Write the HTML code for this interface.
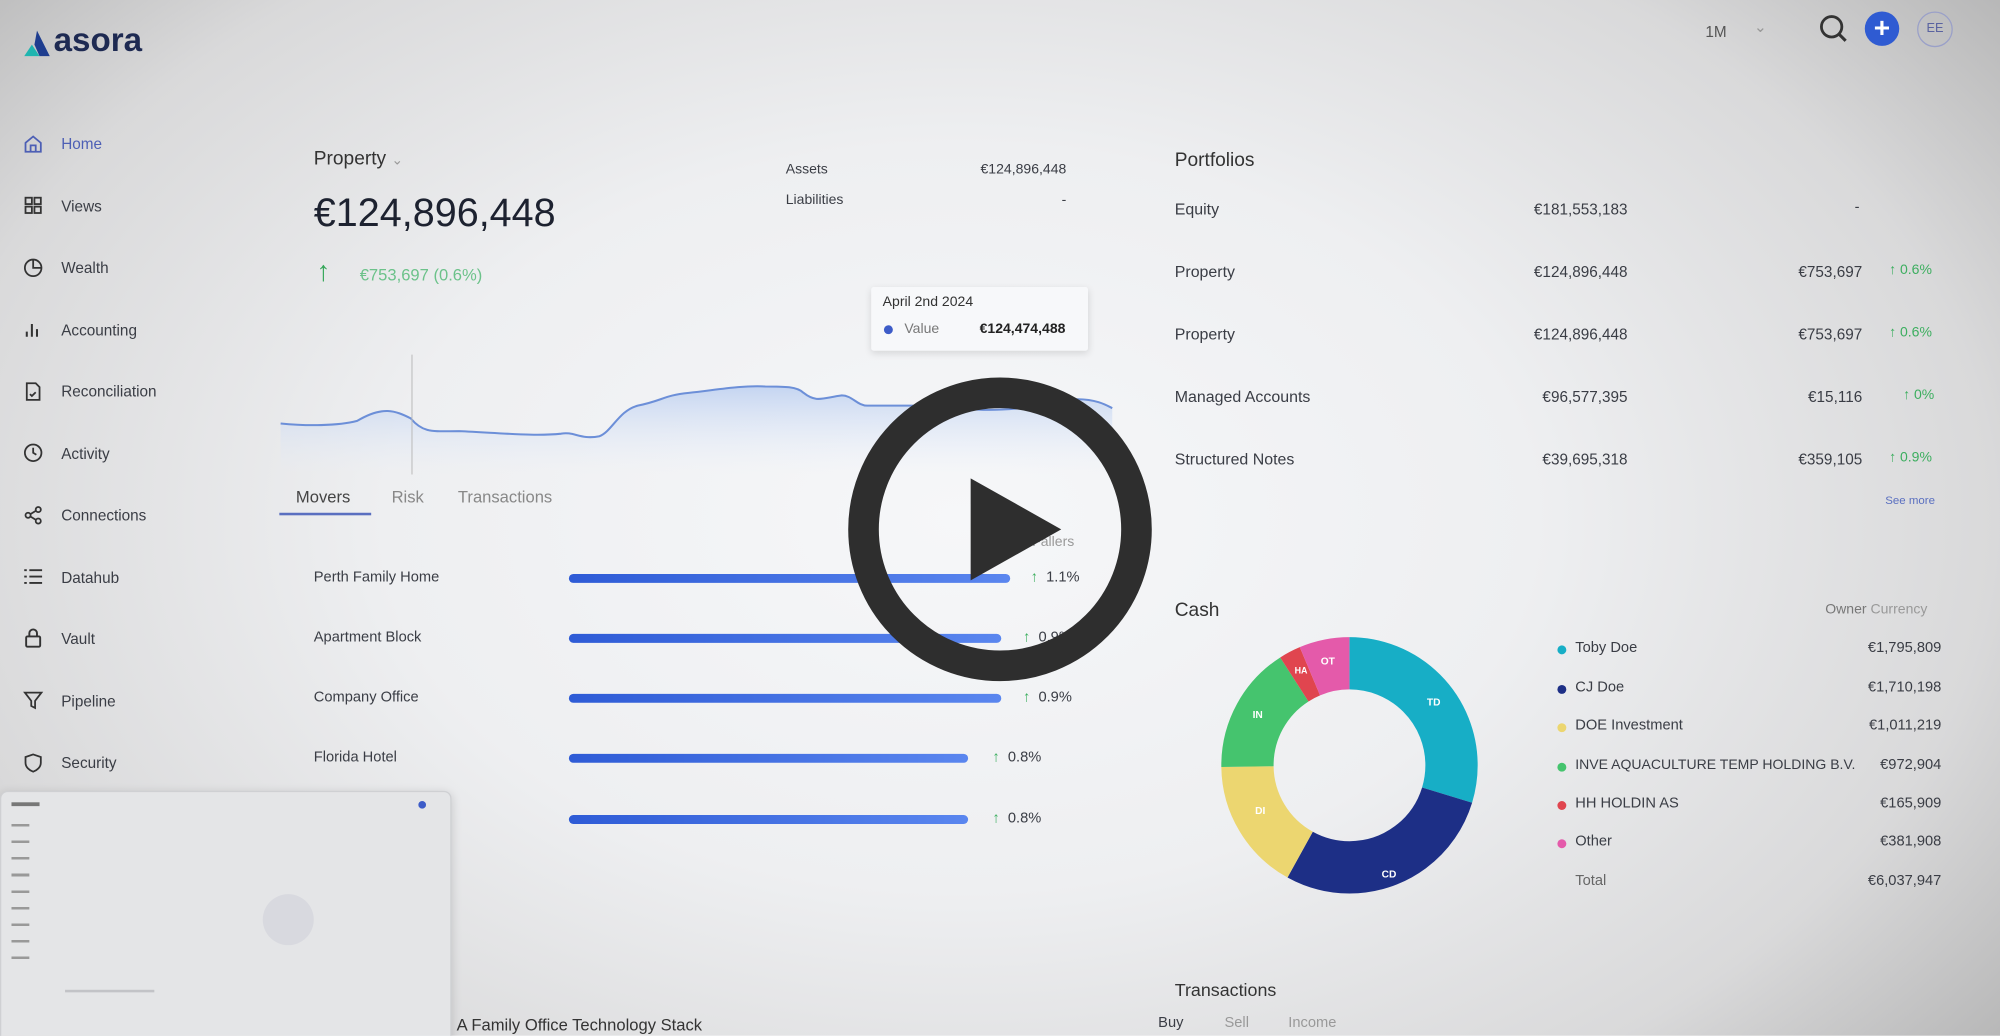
<!DOCTYPE html>
<html><head><meta charset="utf-8">
<style>
html,body{margin:0;padding:0;width:2000px;height:1036px;overflow:hidden;}
#wrap{position:absolute;left:0;top:0;width:1568px;height:812px;transform:scale(1.27551);transform-origin:0 0;
 background:radial-gradient(ellipse 72% 90% at 48% 50%,#f6f7f9 0%,#eeeff1 40%,#d9d9da 72%,#a8a8a8 100%);
 font-family:"Liberation Sans",sans-serif;color:#2a2d36;overflow:hidden;}
.a{position:absolute;white-space:nowrap;}
.nav{font-size:12px;color:#3a3d45;}
.s{font-size:11.5px;color:#3a3d45;}
.r{text-align:right;}
.g{color:#3cae5f;}
.bar{position:absolute;height:7px;border-radius:4px;background:linear-gradient(90deg,#2e5bd6,#5a86ef);}
.ic{position:absolute;left:18px;width:16px;height:16px;}
</style></head><body><div id="wrap">

<!-- logo -->
<svg class="a" style="left:18px;top:23px" width="22" height="22" viewBox="0 0 22 22"><path d="M11 1 L21 21 L13 21 L9 12Z" fill="#1e3d8f"/><path d="M7 12 L1 21 L13 21Z" fill="#1fb5b0"/></svg>
<div class="a" style="left:42px;top:16px;font-size:26px;font-weight:bold;color:#1e2a52;letter-spacing:0px">asora</div>

<!-- top right -->
<div class="a" style="left:1337px;top:18px;font-size:12px;color:#555">1M</div>
<div class="a" style="left:1375px;top:14px;font-size:12px;color:#999">⌄</div>
<svg class="a" style="left:1426px;top:11px" width="24" height="24" viewBox="0 0 24 24"><circle cx="10" cy="10" r="8" fill="none" stroke="#333" stroke-width="2.2"/><path d="M16 16 L21 21" stroke="#333" stroke-width="2.4"/></svg>
<div class="a" style="left:1462px;top:9px;width:27px;height:27px;border-radius:50%;background:#2f5bd2;color:#fff;font-size:22px;line-height:26px;text-align:center;font-weight:bold">+</div>
<div class="a" style="left:1503px;top:9px;width:26px;height:26px;border-radius:50%;border:1.5px solid #9aa0c8;color:#5a63a0;font-size:10px;line-height:26px;text-align:center">EE</div>

<!-- sidebar -->
<svg class="ic" style="top:105px" viewBox="0 0 16 16" fill="none" stroke="#4d5fb5" stroke-width="1.4"><path d="M2 7 L8 2 L14 7 V14 H2Z M6 14 V9 H10 V14"/></svg>
<div class="a nav" style="left:48px;top:106px;color:#4d5fb5">Home</div>
<svg class="ic" style="top:153px" viewBox="0 0 16 16" fill="none" stroke="#333" stroke-width="1.4"><rect x="2" y="2" width="5" height="5"/><rect x="9" y="2" width="5" height="5"/><rect x="2" y="9" width="5" height="5"/><rect x="9" y="9" width="5" height="5"/></svg>
<div class="a nav" style="left:48px;top:155px">Views</div>
<svg class="ic" style="top:202px" viewBox="0 0 16 16" fill="none" stroke="#333" stroke-width="1.4"><circle cx="8" cy="8" r="6.5"/><path d="M8 1.5 V8 H14.5"/></svg>
<div class="a nav" style="left:48px;top:203px">Wealth</div>
<svg class="ic" style="top:250px" viewBox="0 0 16 16" stroke="#333" stroke-width="1.6"><path d="M3 14 V10 M7 14 V4 M11 14 V8"/></svg>
<div class="a nav" style="left:48px;top:252px">Accounting</div>
<svg class="ic" style="top:299px" viewBox="0 0 16 16" fill="none" stroke="#333" stroke-width="1.4"><path d="M3 1.5 H10 L13 4.5 V14.5 H3Z M5.5 10 L7 11.5 L10 8.5"/></svg>
<div class="a nav" style="left:48px;top:300px">Reconciliation</div>
<svg class="ic" style="top:347px" viewBox="0 0 16 16" fill="none" stroke="#333" stroke-width="1.4"><circle cx="8" cy="8" r="6.5"/><path d="M8 4 V8 L10.5 9.5"/></svg>
<div class="a nav" style="left:48px;top:349px">Activity</div>
<svg class="ic" style="top:396px" viewBox="0 0 16 16" fill="none" stroke="#333" stroke-width="1.4"><circle cx="4" cy="8" r="2"/><circle cx="12" cy="3.5" r="2"/><circle cx="12" cy="12.5" r="2"/><path d="M6 7 L10 4.5 M6 9 L10 11.5"/></svg>
<div class="a nav" style="left:48px;top:397px">Connections</div>
<svg class="ic" style="top:444px" viewBox="0 0 16 16" stroke="#333" stroke-width="1.5"><path d="M1 3 H3 M5 3 H15 M1 8 H3 M5 8 H15 M1 13 H3 M5 13 H15"/></svg>
<div class="a nav" style="left:48px;top:446px">Datahub</div>
<svg class="ic" style="top:492px" viewBox="0 0 16 16" fill="none" stroke="#333" stroke-width="1.5"><rect x="2.5" y="7" width="11" height="8" rx="1"/><path d="M5 7 V4.5 A3 3 0 0 1 11 4.5 V7"/></svg>
<div class="a nav" style="left:48px;top:494px">Vault</div>
<svg class="ic" style="top:541px" viewBox="0 0 16 16" fill="none" stroke="#333" stroke-width="1.4"><path d="M1.5 2 H14.5 L9.5 8.5 V14 L6.5 12.5 V8.5Z"/></svg>
<div class="a nav" style="left:48px;top:543px">Pipeline</div>
<svg class="ic" style="top:590px" viewBox="0 0 16 16" fill="none" stroke="#333" stroke-width="1.4"><path d="M8 1.5 L14 3.5 V8 C14 11.5 11 14 8 15 C5 14 2 11.5 2 8 V3.5Z"/></svg>
<div class="a nav" style="left:48px;top:591px">Security</div>

<!-- thumbnail -->
<div class="a" style="left:0;top:620px;width:352px;height:200px;background:#e4e5e7;border:1px solid #cfd0d3;border-radius:6px;box-shadow:0 2px 8px rgba(0,0,0,.15)">
 <div class="a" style="left:8px;top:8px;width:22px;height:3px;background:#777"></div>
 <div class="a" style="left:8px;top:25px;width:14px;height:110px;background:repeating-linear-gradient(#999 0 2px,transparent 2px 13px)"></div>
 <div class="a" style="left:205px;top:80px;width:40px;height:40px;border-radius:50%;background:#d8d9df"></div>
 <div class="a" style="left:327px;top:7px;width:6px;height:6px;border-radius:50%;background:#3d5cc8"></div>
 <div class="a" style="left:50px;top:155px;width:70px;height:2px;background:#c2c3c7"></div>
</div>

<!-- property card -->
<div class="a" style="left:246px;top:116px;font-size:15px;color:#333">Property <span style="color:#999;font-size:11px">⌄</span></div>
<div class="a" style="left:246px;top:149px;font-size:31px;color:#1d2230">€124,896,448</div>
<div class="a" style="left:248px;top:200px;font-size:22px;color:#37a85a;font-weight:bold">↑</div>
<div class="a g" style="left:282px;top:208px;font-size:13px;color:#6cc28a">€753,697 (0.6%)</div>
<div class="a s" style="left:616px;top:127px;font-size:11px">Assets</div>
<div class="a s" style="left:616px;top:151px;font-size:11px">Liabilities</div>
<div class="a s r" style="left:736px;top:127px;width:100px;font-size:11px">€124,896,448</div>
<div class="a s r" style="left:736px;top:151px;width:100px;font-size:11px">-</div>

<svg class="a" style="left:218px;top:270px" width="660" height="110" viewBox="218 270 660 110">
<defs><linearGradient id="f" x1="0" y1="0" x2="0" y2="1"><stop offset="0" stop-color="#b9cdf0" stop-opacity=".8"/><stop offset="1" stop-color="#e6eefb" stop-opacity="0"/></linearGradient></defs>
<path d="M220 332 C240 334 265 334 280 330 C300 318 310 322 322 328 C332 340 340 338 360 338 C400 340 420 342 440 340 C450 338 455 345 470 342 C480 338 485 322 500 318 C520 314 520 310 540 308 C560 306 580 302 600 303 C615 303 625 303 630 308 C640 316 645 312 660 310 C668 310 672 318 680 318 C700 318 730 318 745 318 C760 322 780 322 800 320 C820 316 830 314 845 313 C860 313 868 318 872 320 V372 H220Z" fill="url(#f)"/>
<path d="M220 332 C240 334 265 334 280 330 C300 318 310 322 322 328 C332 340 340 338 360 338 C400 340 420 342 440 340 C450 338 455 345 470 342 C480 338 485 322 500 318 C520 314 520 310 540 308 C560 306 580 302 600 303 C615 303 625 303 630 308 C640 316 645 312 660 310 C668 310 672 318 680 318 C700 318 730 318 745 318 C760 322 780 322 800 320 C820 316 830 314 845 313 C860 313 868 318 872 320" fill="none" stroke="#6c8fd8" stroke-width="1.6"/>
<line x1="323" y1="278" x2="323" y2="372" stroke="#bbb" stroke-width=".8"/>
</svg>
<div class="a" style="left:683px;top:225px;width:170px;height:50px;background:#f7f8fa;box-shadow:0 2px 6px rgba(0,0,0,.12);border-radius:2px">
 <div class="a" style="left:9px;top:6px;font-size:11px;color:#333">April 2nd 2024</div>
 <div class="a" style="left:10px;top:30px;width:7px;height:7px;border-radius:50%;background:#3d5cc8"></div>
 <div class="a" style="left:26px;top:27px;font-size:11px;color:#777">Value</div>
 <div class="a" style="left:85px;top:27px;font-size:11px;color:#222;font-weight:bold">€124,474,488</div>
</div>

<div class="a" style="left:232px;top:382px;font-size:13px;color:#444">Movers</div>
<div class="a" style="left:219px;top:402px;width:72px;height:2px;background:#5a6fc0"></div>
<div class="a" style="left:307px;top:382px;font-size:13px;color:#888">Risk</div>
<div class="a" style="left:359px;top:382px;font-size:13px;color:#888">Transactions</div>
<div class="a" style="left:775px;top:419px;font-size:11px;color:#555">Risers <span style="color:#999">Fallers</span></div>

<div class="a s" style="left:246px;top:447px">Perth Family Home</div>
<div class="bar" style="left:446px;top:450px;width:346px"></div>
<div class="a s" style="left:808px;top:447px"><span class="g">↑</span>&nbsp; 1.1%</div>
<div class="a s" style="left:246px;top:494px">Apartment Block</div>
<div class="bar" style="left:446px;top:497px;width:339px"></div>
<div class="a s" style="left:802px;top:494px"><span class="g">↑</span>&nbsp; 0.9%</div>
<div class="a s" style="left:246px;top:541px">Company Office</div>
<div class="bar" style="left:446px;top:544px;width:339px"></div>
<div class="a s" style="left:802px;top:541px"><span class="g">↑</span>&nbsp; 0.9%</div>
<div class="a s" style="left:246px;top:588px">Florida Hotel</div>
<div class="bar" style="left:446px;top:591px;width:313px"></div>
<div class="a s" style="left:778px;top:588px"><span class="g">↑</span>&nbsp; 0.8%</div>
<div class="bar" style="left:446px;top:639px;width:313px"></div>
<div class="a s" style="left:778px;top:636px"><span class="g">↑</span>&nbsp; 0.8%</div>
<div class="a" style="left:358px;top:796px;font-size:13px;color:#333">A Family Office Technology Stack</div>

<!-- portfolios -->
<div class="a" style="left:921px;top:117px;font-size:15px;color:#333">Portfolios</div>
<div class="a s" style="left:921px;top:157px;font-size:12.5px">Equity</div>
<div class="a s r" style="left:1150px;top:157px;width:126px;font-size:12px">€181,553,183</div>
<div class="a s" style="left:1454px;top:157px">-</div>
<div class="a s" style="left:921px;top:206px;font-size:12.5px">Property</div>
<div class="a s r" style="left:1150px;top:206px;width:126px;font-size:12px">€124,896,448</div>
<div class="a s r" style="left:1370px;top:206px;width:90px;font-size:12px">€753,697</div>
<div class="a g" style="left:1481px;top:206px;font-size:11px">↑ 0.6%</div>
<div class="a s" style="left:921px;top:255px;font-size:12.5px">Property</div>
<div class="a s r" style="left:1150px;top:255px;width:126px;font-size:12px">€124,896,448</div>
<div class="a s r" style="left:1370px;top:255px;width:90px;font-size:12px">€753,697</div>
<div class="a g" style="left:1481px;top:255px;font-size:11px">↑ 0.6%</div>
<div class="a s" style="left:921px;top:304px;font-size:12.5px">Managed Accounts</div>
<div class="a s r" style="left:1150px;top:304px;width:126px;font-size:12px">€96,577,395</div>
<div class="a s r" style="left:1370px;top:304px;width:90px;font-size:12px">€15,116</div>
<div class="a g" style="left:1492px;top:304px;font-size:11px">↑ 0%</div>
<div class="a s" style="left:921px;top:353px;font-size:12.5px">Structured Notes</div>
<div class="a s r" style="left:1150px;top:353px;width:126px;font-size:12px">€39,695,318</div>
<div class="a s r" style="left:1370px;top:353px;width:90px;font-size:12px">€359,105</div>
<div class="a g" style="left:1481px;top:353px;font-size:11px">↑ 0.9%</div>
<div class="a" style="left:1478px;top:387px;font-size:9px;color:#5a6fc0">See more</div>

<!-- cash -->
<div class="a" style="left:921px;top:470px;font-size:15px;color:#333">Cash</div>
<div class="a" style="left:1431px;top:472px;font-size:11px;color:#777">Owner <span style="color:#999">Currency</span></div>
<svg class="a" style="left:950px;top:492px" width="216" height="216" viewBox="-108 -108 216 216">
<g transform="rotate(-90)" fill="none" stroke-width="41">
<circle r="80" stroke="#17aec6" stroke-dasharray="149.3 502.65" stroke-dashoffset="0"/>
<circle r="80" stroke="#1d2f86" stroke-dasharray="142.3 502.65" stroke-dashoffset="-149.3"/>
<circle r="80" stroke="#ecd670" stroke-dasharray="84.2 502.65" stroke-dashoffset="-291.6"/>
<circle r="80" stroke="#45c46e" stroke-dasharray="81 502.65" stroke-dashoffset="-375.8"/>
<circle r="80" stroke="#e0454f" stroke-dasharray="13.8 502.65" stroke-dashoffset="-456.8"/>
<circle r="80" stroke="#e45aaa" stroke-dasharray="31.8 502.65" stroke-dashoffset="-470.6"/>
</g>
<g fill="#fff" font-size="8" font-weight="bold" font-family="Liberation Sans" text-anchor="middle">
<text x="66" y="-47">TD</text><text x="31" y="88">CD</text><text x="-70" y="38">DI</text><text x="-72" y="-37">IN</text><text x="-38" y="-72" font-size="7">HA</text><text x="-17" y="-79">OT</text></g>
</svg>
<div class="a" style="left:1221px;top:506px;width:7px;height:7px;border-radius:50%;background:#17aec6"></div>
<div class="a s" style="left:1235px;top:502px">Toby Doe</div>
<div class="a s r" style="left:1420px;top:502px;width:102px">€1,795,809</div>
<div class="a" style="left:1221px;top:537px;width:7px;height:7px;border-radius:50%;background:#1d2f86"></div>
<div class="a s" style="left:1235px;top:533px">CJ Doe</div>
<div class="a s r" style="left:1420px;top:533px;width:102px">€1,710,198</div>
<div class="a" style="left:1221px;top:567px;width:7px;height:7px;border-radius:50%;background:#ecd670"></div>
<div class="a s" style="left:1235px;top:563px">DOE Investment</div>
<div class="a s r" style="left:1420px;top:563px;width:102px">€1,011,219</div>
<div class="a" style="left:1221px;top:598px;width:7px;height:7px;border-radius:50%;background:#45c46e"></div>
<div class="a s" style="left:1235px;top:594px;font-size:11px">INVE AQUACULTURE TEMP HOLDING B.V.</div>
<div class="a s r" style="left:1420px;top:594px;width:102px">€972,904</div>
<div class="a" style="left:1221px;top:628px;width:7px;height:7px;border-radius:50%;background:#e0454f"></div>
<div class="a s" style="left:1235px;top:624px">HH HOLDIN AS</div>
<div class="a s r" style="left:1420px;top:624px;width:102px">€165,909</div>
<div class="a" style="left:1221px;top:658px;width:7px;height:7px;border-radius:50%;background:#e45aaa"></div>
<div class="a s" style="left:1235px;top:654px">Other</div>
<div class="a s r" style="left:1420px;top:654px;width:102px">€381,908</div>
<div class="a s" style="left:1235px;top:685px;color:#666">Total</div>
<div class="a s r" style="left:1420px;top:685px;width:102px">€6,037,947</div>

<div class="a" style="left:921px;top:768px;font-size:14px;color:#333">Transactions</div>
<div class="a s" style="left:908px;top:796px">Buy</div>
<div class="a s" style="left:960px;top:796px;color:#999">Sell</div>
<div class="a s" style="left:1010px;top:796px;color:#999">Income</div>

<!-- play button -->
<svg class="a" style="left:664px;top:295px" width="240" height="240" viewBox="0 0 240 240">
<circle cx="120" cy="120" r="107" fill="none" stroke="#2e2e2e" stroke-width="24"/>
<path d="M97 80 L168 120 L97 160Z" fill="#2e2e2e"/>
</svg>
</div></body></html>
